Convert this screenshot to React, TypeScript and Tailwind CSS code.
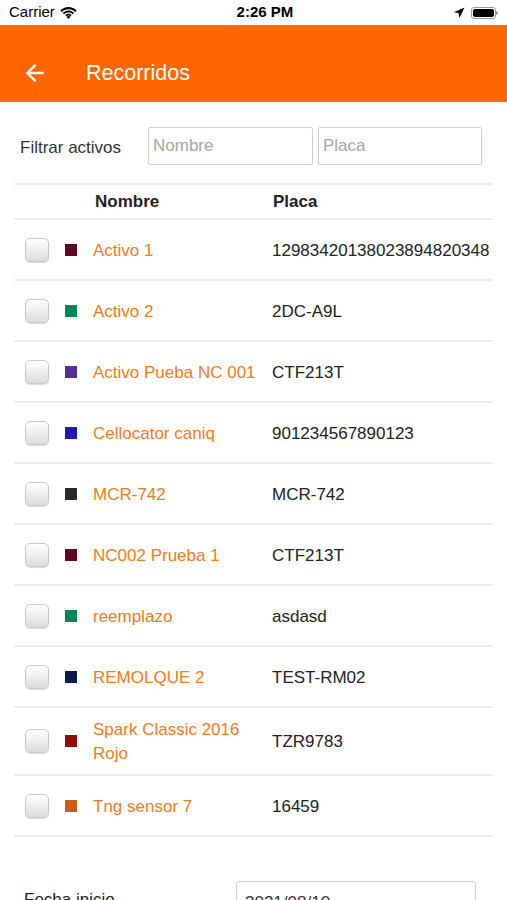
import { ArrowLeft } from "lucide-react";

type Activo = { nombre: string; placa: string; color: string };

const activos: Activo[] = [
  { nombre: "Activo 1", placa: "12983420138023894820348", color: "#5c0a26" },
  { nombre: "Activo 2", placa: "2DC-A9L", color: "#0b8458" },
  { nombre: "Activo Pueba NC 001", placa: "CTF213T", color: "#5a2d91" },
  { nombre: "Cellocator caniq", placa: "901234567890123", color: "#2416b4" },
  { nombre: "MCR-742", placa: "MCR-742", color: "#2a2a2a" },
  { nombre: "NC002 Prueba 1", placa: "CTF213T", color: "#5e0a26" },
  { nombre: "reemplazo", placa: "asdasd", color: "#0b8458" },
  { nombre: "REMOLQUE 2", placa: "TEST-RM02", color: "#0b1a4a" },
  { nombre: "Spark Classic 2016 Rojo", placa: "TZR9783", color: "#8e0f0a" },
  { nombre: "Tng sensor 7", placa: "16459", color: "#c45f1c" },
];

function StatusBar() {
  return (
    <div className="flex h-[25px] items-center justify-between bg-white px-[9px] text-[15px] text-black">
      <div className="flex items-center gap-[5px]">
        <span>Carrier</span>
        <svg width="17" height="12" viewBox="0 0 17 12">
          <path d="M8.5 2.2c2.6 0 5 1 6.8 2.7l1.4-1.5C14.5 1.3 11.6 0 8.5 0S2.5 1.3.3 3.4l1.4 1.5C3.5 3.2 5.9 2.2 8.5 2.2z" fill="#000" />
          <path d="M8.5 5.6c1.7 0 3.2.6 4.4 1.7l1.4-1.5C12.7 4.3 10.7 3.4 8.5 3.4S4.3 4.3 2.7 5.8l1.4 1.5c1.2-1.1 2.7-1.7 4.4-1.7z" fill="#000" />
          <path d="M8.5 8.9c.8 0 1.5.3 2 .8L8.5 12l-2-2.3c.5-.5 1.2-.8 2-.8z" fill="#000" />
          <path d="M8.5 6.8c1.2 0 2.3.5 3.1 1.2l-1.1 1.3c-.5-.5-1.2-.8-2-.8s-1.5.3-2 .8L5.4 8c.8-.7 1.9-1.2 3.1-1.2z" fill="#000" />
        </svg>
      </div>
      <span className="font-semibold">2:26 PM</span>
      <div className="flex items-center gap-[6px]">
        <svg width="12" height="12" viewBox="0 0 12 12">
          <path d="M11.5.5L.8 5.2l4.7.9.9 4.9z" fill="#000" />
        </svg>
        <div className="flex items-center">
          <div className="h-[12px] w-[25px] rounded-[3px] border border-[#999] p-[1px]">
            <div className="h-full w-full rounded-[2px] bg-black" />
          </div>
          <div className="h-[4px] w-[2px] rounded-r-sm bg-[#999]" />
        </div>
      </div>
    </div>
  );
}

function Checkbox() {
  return (
    <div className="h-[24px] w-[24px] rounded-[5px] border border-[#c9c9c9] bg-gradient-to-b from-white to-[#dcdcdc] shadow-[0_1px_1px_rgba(0,0,0,0.15)]" />
  );
}

export default function App() {
  return (
    <div className="min-h-[900px] bg-white font-['Liberation_Sans',Arial,sans-serif]">
      <StatusBar />
      <header className="flex h-[77px] items-center bg-[#ff6600] pl-[22px] pt-[19px] text-white">
        <ArrowLeft size={26} strokeWidth={2.2} />
        <h1 className="ml-[38px] text-[21.5px]">Recorridos</h1>
      </header>

      <div className="px-[14px]">
        <div className="flex items-center pb-[18px] pt-[25px]">
          <span className="w-[134px] pl-[6px] pt-[3px] text-[17px] text-[#333]">Filtrar activos</span>
          <input
            placeholder="Nombre"
            className="h-[38px] w-[165px] rounded-[2px] border border-[#cfcfcf] px-[4px] text-[17px] text-[#333] placeholder:text-[#a6a6a6] focus:outline-none"
          />
          <input
            placeholder="Placa"
            className="ml-[5px] h-[38px] w-[164px] rounded-[2px] border border-[#cfcfcf] px-[4px] text-[17px] text-[#333] placeholder:text-[#a6a6a6] focus:outline-none"
          />
        </div>

        <div className="flex h-[37px] items-center border-y-2 border-[#ececec] text-[17px] font-bold text-[#222]">
          <span className="ml-[81px] w-[178px]">Nombre</span>
          <span>Placa</span>
        </div>

        {activos.map((a) => (
          <div
            key={a.nombre}
            className="flex min-h-[61px] items-center border-b-2 border-[#ececec] py-[8px] text-[17px]"
          >
            <div className="ml-[11px]">
              <Checkbox />
            </div>
            <div className="ml-[16px] h-[12px] w-[12px] shrink-0" style={{ backgroundColor: a.color }} />
            <span className="ml-[16px] w-[179px] shrink-0 pr-[10px] pt-[2px] leading-[24px] text-[#f47a20]">{a.nombre}</span>
            <span className="whitespace-nowrap pt-[2px] text-[#222]">{a.placa}</span>
          </div>
        ))}

        <div className="flex items-center pt-[44px]">
          <span className="w-[222px] pl-[10px] text-[17px] text-[#222]">Fecha inicio</span>
          <div className="h-[38px] w-[240px] rounded-[3px] border border-[#cfcfcf] px-[8px] pt-[8px] text-[17px] text-[#333]">
            2021/08/10
          </div>
        </div>
      </div>
    </div>
  );
}
